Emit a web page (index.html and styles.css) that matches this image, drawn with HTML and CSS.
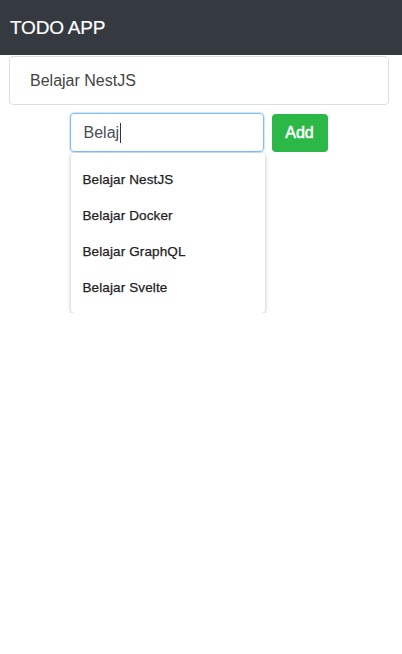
FILE: index.html
```html
<!DOCTYPE html>
<html>
<head>
<meta charset="utf-8">
<link rel="stylesheet" href="styles.css">
</head>
<body>
<header class="navbar"><span class="brand">TODO APP</span></header>
<div class="list-wrap">
  <div class="list-item">Belajar NestJS</div>
</div>
<div class="form-row">
  <div class="input-col">
    <div class="input">Belaj<span class="caret"></span></div>
    <div class="suggest-menu">
      <div class="suggest-item">Belajar NestJS</div>
      <div class="suggest-item">Belajar Docker</div>
      <div class="suggest-item">Belajar GraphQL</div>
      <div class="suggest-item">Belajar Svelte</div>
    </div>
  </div>
  <button class="btn-add">Add</button>
</div>
</body>
</html>
```
FILE: styles.css
```css
html, body {
  margin: 0;
  padding: 0;
  background: #fff;
  font-family: "Liberation Sans", Arial, sans-serif;
}
.navbar {
  height: 55px;
  background: #343a40;
  display: flex;
  align-items: center;
  padding-left: 10px;
  box-sizing: border-box;
}
.brand {
  color: #fff;
  font-size: 19px;
  letter-spacing: -0.2px;
  -webkit-text-stroke: 0.2px #fff;
}
.list-wrap {
  padding: 1px 13px 0 9px;
}
.list-item {
  height: 49px;
  box-sizing: border-box;
  border: 1px solid #dcdfe2;
  border-radius: 4px;
  display: flex;
  align-items: center;
  padding-left: 20px;
  font-size: 16px;
  color: #444;
}
.form-row {
  display: flex;
  justify-content: center;
  align-items: flex-start;
  gap: 7px;
  margin-top: 8px;
  padding-right: 5px;
}
.input-col {
  display: flex;
  flex-direction: column;
  width: 195px;
}
.input {
  width: 194px;
  height: 39px;
  box-sizing: border-box;
  border: 1px solid #80bdff;
  border-radius: 4px;
  box-shadow: 0 0 0 1px rgba(128, 189, 255, 0.35);
  padding-left: 13px;
  display: flex;
  align-items: center;
  font-size: 16px;
  color: #495057;
}
.caret {
  display: inline-block;
  width: 1px;
  height: 20px;
  background: #333;
  margin-left: 1px;
}
.suggest-menu {
  margin: 1px 0 0 1px;
  width: 194px;
  padding: 9px 0 7px;
  background: #fff;
  border-radius: 4px;
  box-shadow: 0 1px 4px rgba(0, 0, 0, 0.28);
  box-sizing: border-box;
}
.suggest-item {
  height: 36px;
  line-height: 36px;
  padding-left: 12px;
  font-size: 13.5px;
  letter-spacing: 0.12px;
  color: #222;
  -webkit-text-stroke: 0.25px #222;
}
.btn-add {
  width: 56px;
  height: 38px;
  margin-top: 1px;
  border: none;
  border-radius: 4px;
  background: #2bb847;
  color: #fff;
  font-family: "Liberation Sans", Arial, sans-serif;
  font-size: 16px;
  font-weight: normal;
  -webkit-text-stroke: 0.5px #fff;
  padding: 0;
}
```
